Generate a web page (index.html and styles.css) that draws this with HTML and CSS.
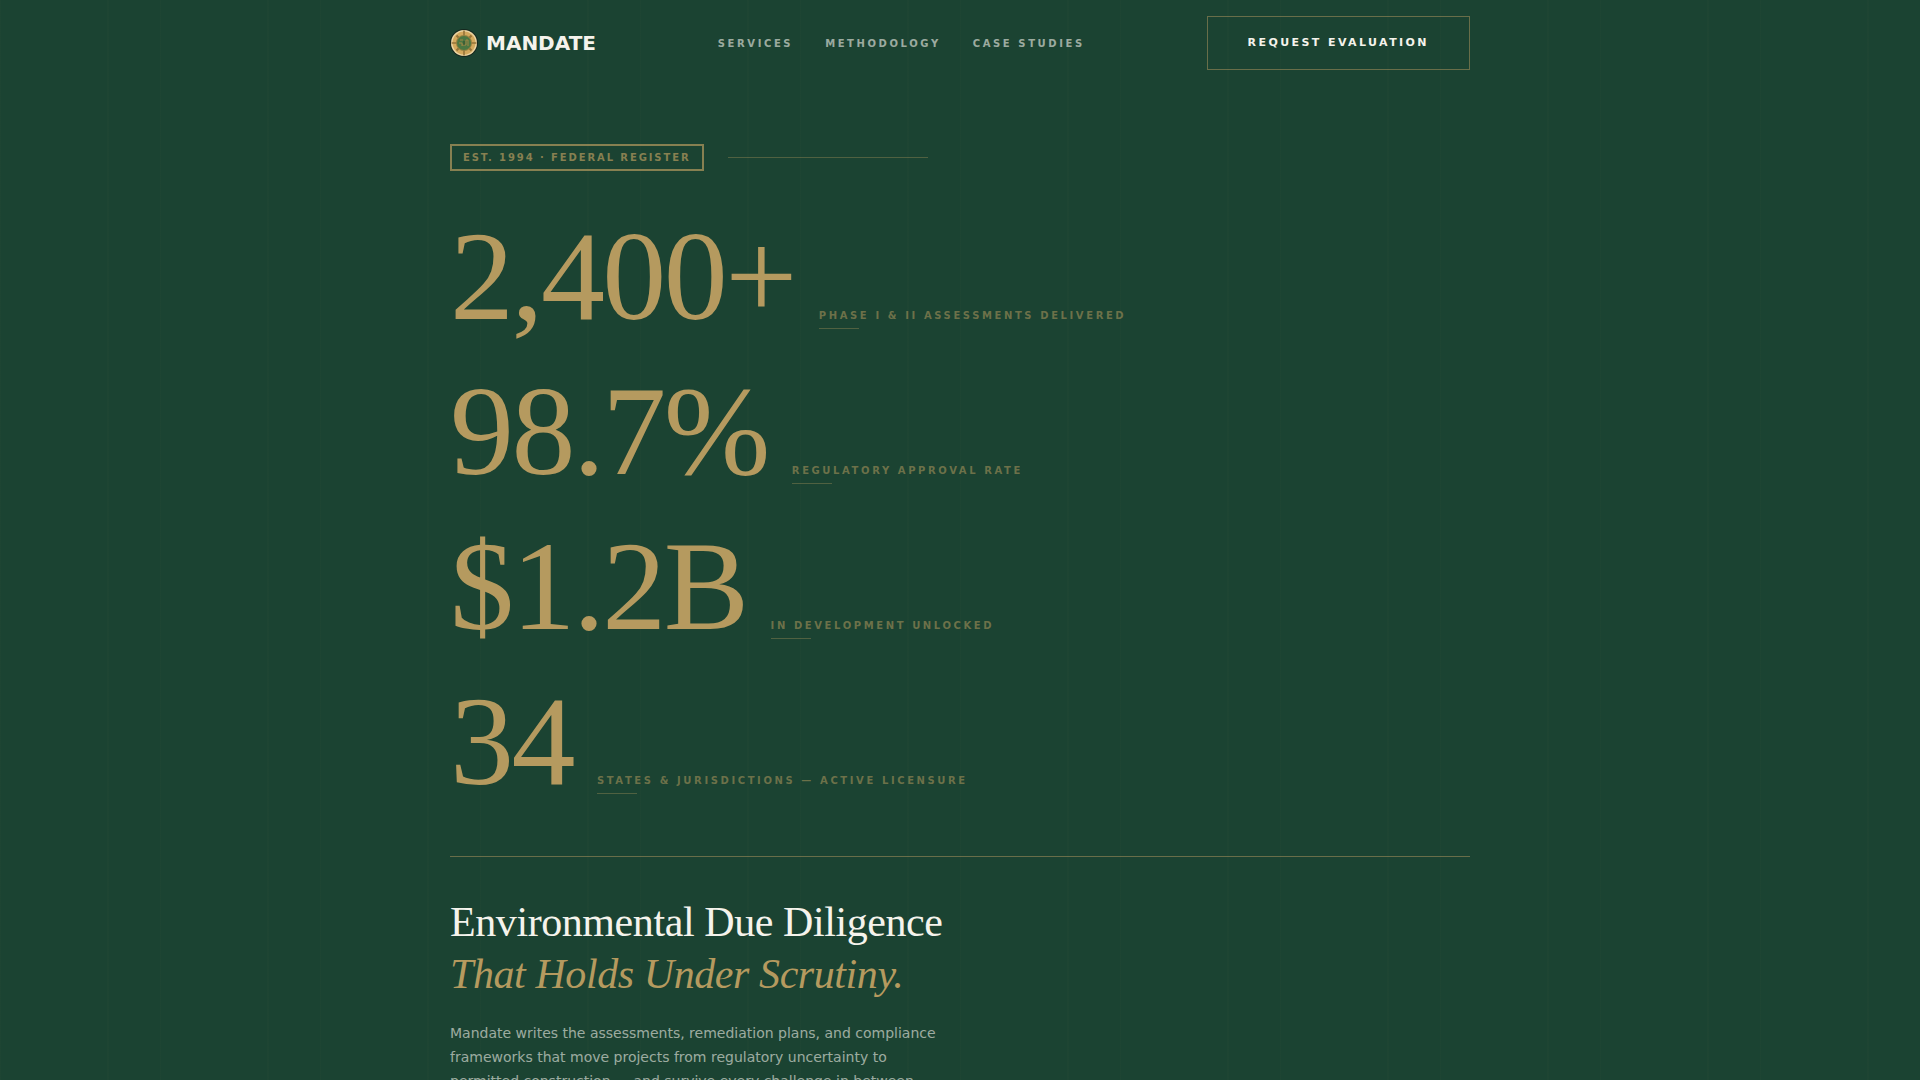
FILE: index.html
```html
<!DOCTYPE html>
<html lang="en">
<head>
    <meta charset="UTF-8">
    <meta name="viewport" content="width=device-width, initial-scale=1.0">
    <title>Mandate</title>
    <link rel="stylesheet" href="styles.css">
</head>
<body>

    <header class="site-header">
        <div class="container header-inner">
            <a href="#" class="brand">
                <svg class="brand-seal" viewBox="0 0 28 28" aria-hidden="true">
                    <circle cx="14" cy="14" r="14" fill="#15271e"/>
                    <circle cx="14" cy="14" r="13" fill="#ecd5a3"/>
                    <circle cx="14" cy="14" r="11.5" fill="#d3a85c"/>
                    <g stroke="#94733a" stroke-width="1.6">
                        <path d="M14 1.5v25M1.5 14h25"/>
                        <path d="M6.5 6.5l15 15M21.5 6.5l-15 15" stroke-width="2"/>
                    </g>
                    <circle cx="14" cy="14" r="8" fill="#93803f"/>
                    <circle cx="14" cy="14" r="7" fill="#4c7742"/>
                    <path d="M9 14h3v3M12 16h4v-5h2v6M10 11h3" fill="none" stroke="#a08644"/>
                    <path d="M14 12v4" stroke="#2b4a2d"/>
                </svg>
                <span class="brand-name">MANDATE</span>
            </a>
            <nav class="main-nav">
                <a href="#services">Services</a>
                <a href="#methodology">Methodology</a>
                <a href="#cases">Case Studies</a>
            </nav>
            <a href="#contact" class="btn-outline">Request Evaluation</a>
        </div>
    </header>

    <main class="container hero">
        <div class="stamp-row">
            <span class="stamp">Est. 1994 · Federal Register</span>
            <span class="stamp-line"></span>
        </div>

        <div class="stats">
            <div class="stat">
                <span class="stat-number">2,400+</span>
                <span class="stat-label">Phase I &amp; II Assessments Delivered</span>
            </div>
            <div class="stat">
                <span class="stat-number">98.7%</span>
                <span class="stat-label">Regulatory Approval Rate</span>
            </div>
            <div class="stat">
                <span class="stat-number">$1.2B</span>
                <span class="stat-label">In Development Unlocked</span>
            </div>
            <div class="stat">
                <span class="stat-number">34</span>
                <span class="stat-label">States &amp; Jurisdictions — Active Licensure</span>
            </div>
        </div>

        <section class="intro">
            <h1>Environmental Due Diligence<br><em>That Holds Under Scrutiny.</em></h1>
            <p>Mandate writes the assessments, remediation plans, and compliance frameworks that move projects from regulatory uncertainty to permitted construction — and survive every challenge in between.</p>
        </section>
    </main>

</body>
</html>
```

FILE: styles.css
```css
:root {
    --green: #1b4332;
    --gold: #b59a5f;
    --cream: #f5f3ec;
    --line: rgba(181, 154, 95, 0.02);
}

* {
    box-sizing: border-box;
    margin: 0;
    padding: 0;
}

body {
    font-family: "DejaVu Sans", sans-serif;
    color: var(--cream);
    background-color: var(--green);
    /* faint vertical ledger lines */
    background-image: repeating-linear-gradient(90deg, var(--line) 0 1px, transparent 1px 107px, var(--line) 107px 109px, transparent 109px 160px);
}

a {
    color: inherit;
    text-decoration: none;
}

.container {
    max-width: 1100px;
    margin: 0 auto;
    padding: 0 40px;
}

.site-header {
    padding: 16px 0;
}

.header-inner {
    display: flex;
    align-items: center;
    justify-content: space-between;
}

.brand {
    display: flex;
    align-items: center;
    gap: 8px;
}

.brand-seal {
    width: 28px;
    height: 28px;
}

.brand-name {
    font-size: 20px;
    font-weight: 700;
}

.main-nav {
    display: flex;
    gap: 32px;
    font-size: 10px;
    font-weight: 600;
    letter-spacing: 0.26em;
    text-transform: uppercase;
    color: rgba(245, 243, 236, 0.6);
}

.btn-outline {
    padding: 20px 40px;
    border: 1px solid rgba(181, 154, 95, 0.5);
    font-size: 11px;
    font-weight: 700;
    line-height: 12px;
    letter-spacing: 0.22em;
    text-transform: uppercase;
}

.hero {
    padding-top: 58px;
}

.stamp-row {
    display: flex;
    align-items: center;
    gap: 24px;
}

.stamp {
    padding: 6px 11px;
    border: 2px solid var(--gold);
    color: var(--gold);
    font-size: 10px;
    font-weight: 700;
    line-height: 11px;
    letter-spacing: 0.19em;
    text-transform: uppercase;
    opacity: 0.7;
}

.stamp-line {
    width: 200px;
    height: 1px;
    background-color: rgba(181, 154, 95, 0.35);
}

.stats {
    display: flex;
    flex-direction: column;
    gap: 40px;
    padding: 48px 0 57px;
    border-bottom: 1px solid rgba(181, 154, 95, 0.5);
}

.stat {
    display: flex;
    align-items: baseline;
    gap: 24px;
}

.stat-number {
    font-family: "Liberation Serif", serif;
    font-size: 128px;
    line-height: 115px;
    letter-spacing: -0.02em;
    color: var(--gold);
}

.stat-label {
    font-size: 10px;
    font-weight: 600;
    line-height: 12px;
    letter-spacing: 0.26em;
    text-transform: uppercase;
    color: rgba(181, 154, 95, 0.55);
}

.stat-label::after {
    content: "";
    display: block;
    width: 40px;
    height: 1px;
    margin-top: 6px;
    background-color: rgba(181, 154, 95, 0.35);
}

.intro {
    padding: 39px 0;
}

.intro h1 {
    font-family: "Liberation Serif", serif;
    font-size: 42px;
    font-weight: 400;
    line-height: 52px;
    letter-spacing: -0.01em;
}

.intro em {
    color: var(--gold);
}

.intro p {
    max-width: 500px;
    margin-top: 21px;
    font-size: 14px;
    line-height: 24px;
    color: rgba(245, 243, 236, 0.6);
}
```
